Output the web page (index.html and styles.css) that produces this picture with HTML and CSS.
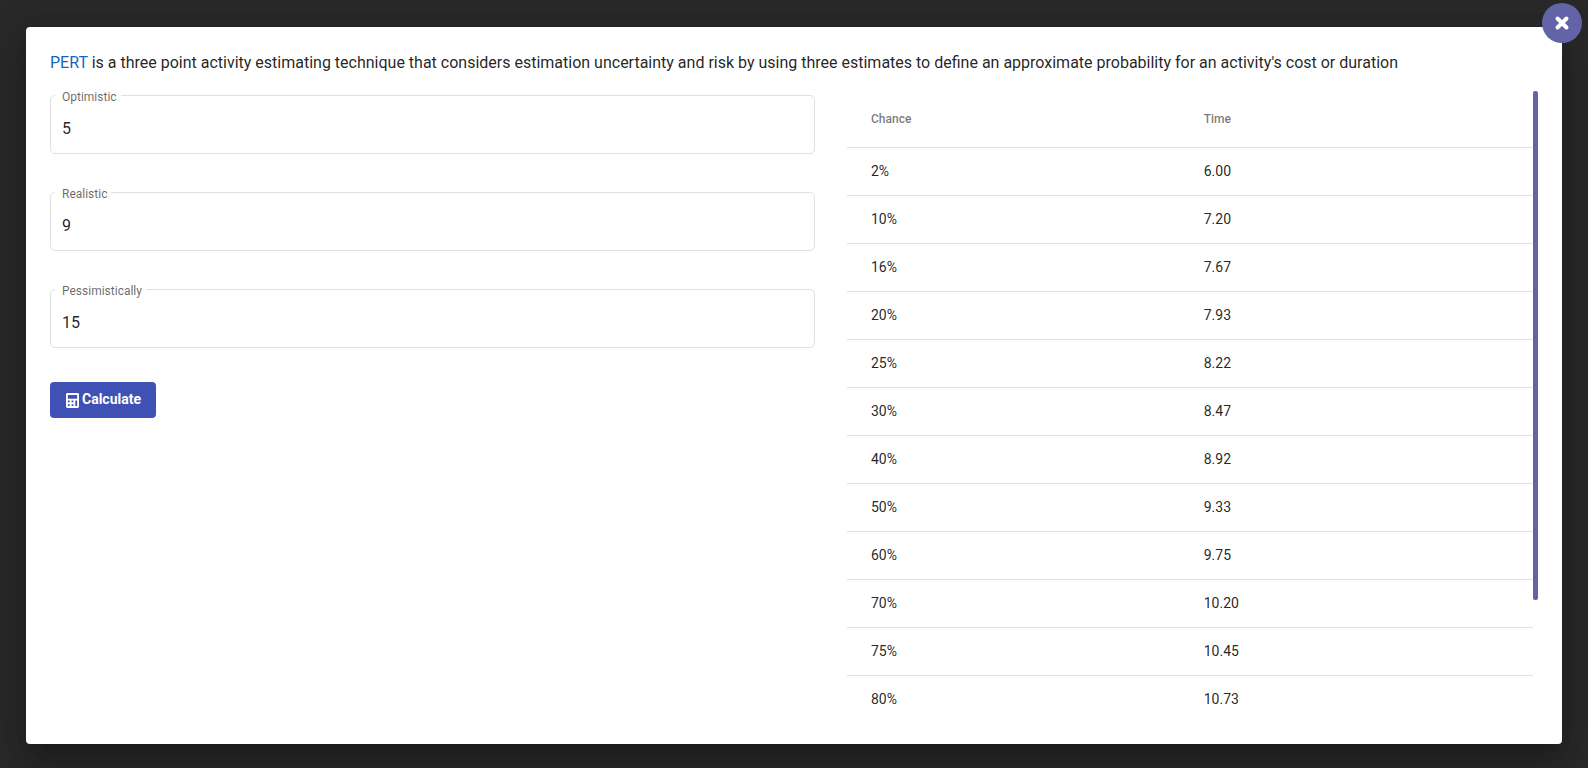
FILE: index.html
```html
<!DOCTYPE html>
<html lang="en">
<head>
<meta charset="utf-8">
<title>PERT calculator</title>
<link rel="stylesheet" href="styles.css">
</head>
<body>
<main class="dialog" role="dialog" aria-label="PERT calculator">
  <button class="close" type="button" aria-label="Close">
    <svg viewBox="0 0 16 16" width="16" height="16" aria-hidden="true"><path d="M3.500 3.500l9 9M12.500 3.500l-9 9"/></svg>
  </button>
  <p class="intro"><a href="#pert">PERT</a> is a three point activity estimating technique that considers estimation uncertainty and risk by using three estimates to define an approximate probability for an activity's cost or duration</p>
  <div class="columns">
    <form class="form">
      <div class="field">
        <label for="optimistic">Optimistic</label>
        <input id="optimistic" type="text" inputmode="decimal" value="5">
      </div>
      <div class="field">
        <label for="realistic">Realistic</label>
        <input id="realistic" type="text" inputmode="decimal" value="9">
      </div>
      <div class="field">
        <label for="pessimistic">Pessimistically</label>
        <input id="pessimistic" type="text" inputmode="decimal" value="15">
      </div>
      <button class="calculate" type="button">
        <svg viewBox="0 0 448 512" width="13" height="15" aria-hidden="true"><path d="M400 0H48C22.400 0 0 22.400 0 48v416c0 25.600 22.400 48 48 48h352c25.600 0 48-22.400 48-48V48c0-25.600-22.400-48-48-48zM128 435.200c0 6.400-6.400 12.800-12.800 12.800H76.800c-6.400 0-12.800-6.400-12.800-12.800v-38.400c0-6.400 6.400-12.800 12.800-12.800h38.400c6.400 0 12.800 6.400 12.800 12.800v38.400zm0-128c0 6.400-6.400 12.800-12.800 12.800H76.800c-6.400 0-12.800-6.400-12.800-12.800v-38.400c0-6.400 6.400-12.800 12.800-12.800h38.400c6.400 0 12.800 6.400 12.800 12.800v38.400zm128 128c0 6.400-6.400 12.800-12.800 12.800h-38.400c-6.400 0-12.800-6.400-12.800-12.800v-38.400c0-6.400 6.400-12.800 12.800-12.800h38.400c6.400 0 12.800 6.400 12.800 12.800v38.400zm0-128c0 6.400-6.400 12.800-12.800 12.800h-38.400c-6.400 0-12.800-6.400-12.800-12.800v-38.400c0-6.400 6.400-12.800 12.800-12.800h38.400c6.400 0 12.800 6.400 12.800 12.800v38.400zm128 128c0 6.400-6.400 12.800-12.800 12.800h-38.400c-6.400 0-12.800-6.400-12.800-12.800V268.800c0-6.400 6.400-12.800 12.800-12.800h38.400c6.400 0 12.800 6.400 12.800 12.800v166.400zm0-256c0 6.400-6.400 12.800-12.800 12.800H76.800c-6.400 0-12.800-6.400-12.800-12.800V76.800C64 70.400 70.400 64 76.800 64h294.400c6.400 0 12.800 6.400 12.800 12.800v102.400z"/></svg>
        <span>Calculate</span>
      </button>
    </form>
    <div class="results">
      <table>
        <thead><tr><th scope="col">Chance</th><th scope="col">Time</th></tr></thead>
        <tbody>
          <tr><td>2%</td><td>6.00</td></tr>
          <tr><td>10%</td><td>7.20</td></tr>
          <tr><td>16%</td><td>7.67</td></tr>
          <tr><td>20%</td><td>7.93</td></tr>
          <tr><td>25%</td><td>8.22</td></tr>
          <tr><td>30%</td><td>8.47</td></tr>
          <tr><td>40%</td><td>8.92</td></tr>
          <tr><td>50%</td><td>9.33</td></tr>
          <tr><td>60%</td><td>9.75</td></tr>
          <tr><td>70%</td><td>10.20</td></tr>
          <tr><td>75%</td><td>10.45</td></tr>
          <tr><td>80%</td><td>10.73</td></tr>
        </tbody>
      </table>
      <div class="scrollbar" aria-hidden="true"><div class="thumb"></div></div>
    </div>
  </div>
</main>
</body>
</html>
```
FILE: styles.css
```css
* {
  box-sizing: border-box;
}

body {
  display: flex;
  height: 100vh;
  margin: 0;
  padding: 27px 26px 24px;
  background: #292929;
  color: rgba(0, 0, 0, 0.87);
  font-family: Roboto, "Liberation Sans", sans-serif;
  font-size: 16px;
  line-height: 24px;
}

.dialog {
  position: relative;
  display: flex;
  flex: 1;
  flex-direction: column;
  gap: 16px;
  min-width: 0;
  padding: 24px;
  border-radius: 4px;
  background: #fff;
  box-shadow: 0 11px 15px -7px rgba(0, 0, 0, 0.2), 0 24px 38px 3px rgba(0, 0, 0, 0.14), 0 9px 46px 8px rgba(0, 0, 0, 0.12);
}

.close {
  position: absolute;
  top: -24px;
  right: -20px;
  display: flex;
  align-items: center;
  justify-content: center;
  width: 40px;
  height: 40px;
  padding: 0;
  border: 0;
  border-radius: 50%;
  background: #6264a7;
  cursor: pointer;
}

.close path {
  fill: none;
  stroke: #fff;
  stroke-width: 4;
  stroke-linecap: round;
}

.intro {
  margin: 0;
}

.intro a {
  color: #1565c0;
  text-decoration: none;
}

.columns {
  display: grid;
  flex: 1;
  grid-template-columns: 765fr 691fr;
  gap: 32px;
  min-height: 0;
}

.form {
  display: flex;
  flex-direction: column;
  align-items: stretch;
  gap: 38px;
  padding-top: 4px;
}

.field {
  position: relative;
}

.field label {
  position: absolute;
  top: -7px;
  left: 5px;
  padding: 0 4px 0 7px;
  background: #fff;
  color: rgba(0, 0, 0, 0.6);
  font-size: 12px;
  line-height: 18px;
}

.field input {
  display: block;
  width: 100%;
  height: 59px;
  padding: 8px 11px 0;
  border: 1px solid #e0e0e0;
  border-radius: 5px;
  background: transparent;
  color: inherit;
  font: inherit;
}

.calculate {
  display: flex;
  align-items: center;
  align-self: flex-start;
  gap: 3px;
  margin-top: -4px;
  padding: 0 15px 0 16px;
  border: 0;
  border-radius: 4px;
  background: #3f51b5;
  color: #fff;
  font-family: inherit;
  font-size: 14px;
  font-weight: 700;
  line-height: 34px;
  cursor: pointer;
}

.calculate span {
  padding-bottom: 2px;
}

.calculate svg {
  fill: currentColor;
}

.results {
  display: flex;
  align-items: stretch;
  min-height: 0;
  overflow: hidden;
}

.scrollbar {
  flex: none;
  width: 5px;
}

.thumb {
  height: 81%;
  border-radius: 2px;
  background: #6264a7;
}

table {
  flex: 1;
  align-self: flex-start;
  border-collapse: separate;
  border-spacing: 0;
  font-size: 14px;
}

th,
td {
  height: 48px;
  padding: 0 0 2px;
  border-bottom: 1px solid #e0e0e0;
  text-align: left;
}

tr:last-child td {
  border-bottom-color: transparent;
}

thead tr:last-child th {
  height: 57px;
  padding-bottom: 0;
  border-bottom-color: #e0e0e0;
  color: rgba(0, 0, 0, 0.54);
  font-size: 12px;
  font-weight: 500;
}

th:first-child,
td:first-child {
  width: 52%;
  padding-left: 24px;
}
```
